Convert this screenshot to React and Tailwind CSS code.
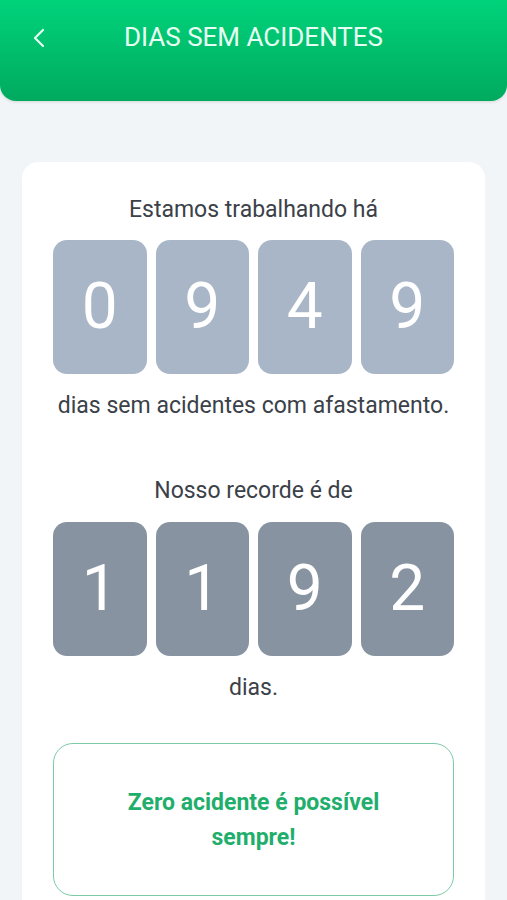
import React from "react";

function Digits({ value, tone }) {
  return (
    <div className="grid grid-cols-4 gap-[9px]">
      {value.split("").map((d, i) => (
        <div
          key={i}
          className={`h-[134px] rounded-[14px] flex items-center justify-center text-white text-[64px] leading-none ${tone}`}
        >
          {d}
        </div>
      ))}
    </div>
  );
}

export default function App() {
  return (
    <div
      className="min-h-[900px] h-[900px] overflow-hidden bg-[#f1f5f8]"
      style={{ fontFamily: "Roboto, 'Noto Sans', sans-serif" }}
    >
      {/* header */}
      <header className="relative h-[101px] rounded-b-[16px] bg-gradient-to-b from-[#00d37b] to-[#00aa5f] shadow-[0_1px_3px_rgba(0,0,0,0.12)]">
        <div className="flex items-center justify-center h-[74px] text-[26px] text-[#e8fff4]">
          DIAS SEM ACIDENTES
        </div>
        <button className="absolute left-[29px] top-[26px] text-[#e8fff4]">
          <svg width="20" height="24" viewBox="0 0 20 24" fill="none">
            <path d="M14 4 L6 12 L14 20" stroke="currentColor" strokeWidth="2.2" strokeLinecap="round" strokeLinejoin="round" />
          </svg>
        </button>
      </header>

      {/* card */}
      <main className="mx-[22px] mt-[61px] bg-white rounded-[16px] px-[31px] pt-[34px] pb-10">
        <p className="text-center text-[23px] leading-[28px] text-[#3b4149]">Estamos trabalhando há</p>
        <div className="mt-4">
          <Digits value="0949" tone="bg-[#a8b6c7]" />
        </div>
        <p className="mt-[18px] text-center text-[23px] leading-[28px] text-[#3b4149]">
          dias sem acidentes com afastamento.
        </p>

        <p className="mt-[57px] text-center text-[23px] leading-[28px] text-[#3b4149]">Nosso recorde é de</p>
        <div className="mt-[17px]">
          <Digits value="1192" tone="bg-[#8793a1]" />
        </div>
        <p className="mt-[18px] text-center text-[23px] leading-[28px] text-[#3b4149]">dias.</p>

        <div className="mt-[41px] h-[153px] rounded-[20px] border border-[#7ccaa6] flex items-center justify-center px-[66px]">
          <p className="text-center text-[23px] leading-[35px] font-bold text-[#1fae6c]">
            Zero acidente é possível sempre!
          </p>
        </div>
      </main>
    </div>
  );
}
